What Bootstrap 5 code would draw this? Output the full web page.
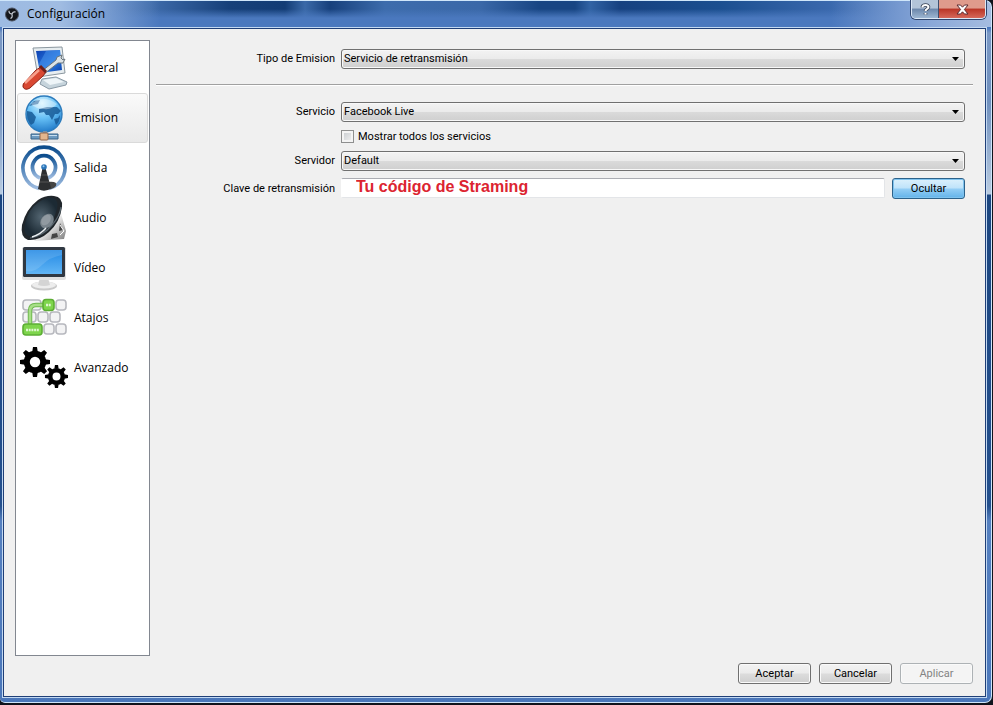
<!DOCTYPE html>
<html lang="es">
<head>
<meta charset="utf-8">
<meta name="viewport" content="width=device-width, initial-scale=1">
<title>Configuración</title>
<link href="https://cdn.jsdelivr.net/npm/bootstrap@5.3.0/dist/css/bootstrap.min.css" rel="stylesheet">
<style>
body { font: 11px/16px Roboto, sans-serif; color: #000; background: #10131c; }
.win {
  min-height: 100vh; padding: 0 1px 2px 0;
}
.glass {
  border: solid #cfe6fa; border-width: 1px 1px 1px 0; border-radius: 0 7px 7px 5px; padding: 0 5px 5px 3px;
  background:
    linear-gradient(90deg, #9dbbe2 0, #a0bce2 60px, transparent 160px) 0 0 / 100% 26px no-repeat,
    linear-gradient(270deg, #a5bce0 0, #8aa8d8 60px, transparent 160px) 0 0 / 100% 26px no-repeat,
    linear-gradient(180deg, transparent 8px, #4a78be 17px) 0 0 / 100% 26px no-repeat,
    linear-gradient(90deg, transparent 100px, #3f6cab 150px, #164079 230px, #123c75 285px, #3a69a8 305px, #16407c 330px, #3d6cac 385px, #3a68a8 480px, #174583 540px, #174583 575px, #3163a4 590px, #164180 620px, #1b4f90 720px, #3564a8 810px, transparent 900px) 0 0 / 100% 20px no-repeat,
    linear-gradient(180deg, #4a78be 0, #4a78be 27px, #7b98c4 32px, #6f8fbd 100px, #b9cbe0 193px, #1c4680 194px, #24508e 505px, #5580c0 520px, #4b77ba 100%);
}
.titlebar { height: 27px; font: 12px/16px "Open Sans", sans-serif; padding: 5px 0 0 2px; }
.caption-btns { margin-top: -6px; height: 19px; border: 1px solid #dce8f6; border-top: 0; border-radius: 0 0 5px 5px; overflow: hidden; box-shadow: 0 0 0 1px #30456c; }
.caption-btns button { border: 0; padding: 0; display: grid; place-items: center; }
.caption-btns .btn-help { width: 27px; background: linear-gradient(#b3c4d8 45%, #6c87ab 50%, #9db6d2); border-right: 1px solid #3d4f6f; }
.btn-shut { width: 46px; background: linear-gradient(#df9b8c 45%, #b93526 50%, #d5685a); }
.panel { background: #f0f0f0; border: 1px solid #1f3f78; outline: 1px solid #c3d9f2; padding: 11px 12px 12px 11px; }
.side { width: 135px; background: #fff; border: 1px solid #828790; padding: 2px 1px; }
.side a { height: 50px; padding: 0 2px; gap: 6px; font: 12px/16px "Open Sans", sans-serif; color: #000; text-decoration: none; border: 1px solid transparent; border-radius: 3px; }
.side a.active { background: linear-gradient(#fafafa, #e9e9e9); border-color: #dadada; }
.side svg { width: 48px; height: 48px; flex: none; }
.main-col { margin-left: 6px; padding-top: 9px; }
.form-rows { display: grid; grid-template-columns: 179px 1fr; column-gap: 6px; padding-right: 8px; align-items: center; }
.form-rows > label { text-align: right; }
.tick-row { grid-column: 2; height: 29px; }
.drop {
  appearance: none; width: 100%; height: 20px; border: 1px solid #707070; border-radius: 3px; padding: 0 20px 0 2px; color: #000; font: inherit; line-height: 18px;
  background: url("data:image/svg+xml,%3Csvg xmlns='http://www.w3.org/2000/svg' width='7' height='4'%3E%3Cpath d='M0 0h7L3.500 4z'/%3E%3C/svg%3E") right 5px center no-repeat, linear-gradient(#f3f3f3 0, #ebebeb 48%, #dadada 52%, #cfcfcf 100%);
  box-shadow: inset 0 0 0 1px #f8f8f8;
}
.rule { margin: 15px 0 17px; border: 0; border-top: 1px solid #a0a0a0; opacity: 1; box-shadow: 0 1px #fff; }
.tick { appearance: none; width: 13px; height: 13px; margin: 0; border: 1px solid #8e8f8f; background: linear-gradient(135deg, #c4c8cc, #f4f4f4); box-shadow: inset 0 0 0 2px #f4f4f4; }
.key-row { padding-top: 7px; gap: 7px; }
.key { flex: 1; min-width: 0; height: 20px; border: 1px solid #e3e5e8; border-top-color: #abadb3; border-left-color: #fff; border-radius: 2px; padding: 0 14px 2px; font: bold 16px/16px "Liberation Sans", sans-serif; color: #dc2430; background: #fff; }
.push { width: 73px; height: 21px; padding: 0; border: 1px solid #707070; border-radius: 3px; font: inherit; color: #000; background: linear-gradient(#f3f3f3 0, #ebebeb 48%, #dcdcdc 52%, #cfcfcf 100%); box-shadow: inset 0 0 0 1px #fafafa; }
.push.hot { border-color: #2c628b; background: linear-gradient(#dcf1fc 0, #bfe3fa 48%, #94cef5 52%, #62b3ea 100%); box-shadow: inset 0 0 0 1px #7fc3ee; }
.push:disabled { border-color: #adb2b5; color: #838383; background: #f4f4f4; }
.actions { padding-top: 7px; }
</style>
<script src="https://cdn.jsdelivr.net/npm/bootstrap@5.3.0/dist/js/bootstrap.bundle.min.js"></script>
</head>
<body>
<div class="win d-flex flex-column">
<div class="glass d-flex flex-column flex-grow-1">
  <header class="titlebar d-flex align-items-start">
    <svg class="flex-shrink-0" width="14" height="16" viewBox="0 -1 14 16" aria-hidden="true"><circle cx="7" cy="7.500" r="6.500" fill="#15171b" stroke="#4b5260"/><g fill="none" stroke="#c4c9d0" stroke-width="1.200"><path d="M4 3.700c-.2 2 1 3.200 3 3.200M10.600 5c-1.900-.6-3.300.4-3.600 2.400M5.500 11.500c1.700-.8 2.200-2.400 1.300-4.100"/></g></svg>
    <span class="ms-1 ps-1">Configuración</span>
    <div class="caption-btns d-flex ms-auto">
      <button type="button" class="btn-help" aria-label="Ayuda"><svg width="11" height="13" viewBox="0 0 11 13"><g fill="none"><path d="M2.500 4.500V3.500Q3 2 5.500 2T8.500 4Q8.500 5 7 6T5.500 8M5.500 10v1.500" stroke="#3b4557" stroke-width="3.600"/><path d="M2.500 4.500V3.500Q3 2 5.500 2T8.500 4Q8.500 5 7 6T5.500 8M5.500 10v1.500" stroke="#fff" stroke-width="2"/></g></svg></button>
      <button type="button" class="btn-shut" aria-label="Cerrar"><svg width="13" height="11" viewBox="0 0 13 11"><path d="M1 1h3.500l2 2.200L8.500 1H12L8.400 5.500 12 10H8.500l-2-2.200L4.500 10H1l3.600-4.500z" fill="#fff" stroke="#5a2b30"/></svg></button>
    </div>
  </header>
  <div class="panel d-flex flex-column flex-grow-1">
    <div class="d-flex flex-grow-1">
      <nav class="side d-flex flex-column">
        <a href="#general" class="d-flex align-items-center">
          <svg viewBox="0 0 48 48"><defs><linearGradient id="scr" x2="1" y2="1"><stop stop-color="#0c3fb0"/><stop offset=".6" stop-color="#2b7be4"/><stop offset="1" stop-color="#0a3da6"/></linearGradient></defs><path d="M22 35l14-2 11 5-1 3-17 4-9-5z" fill="#c6d4dc" stroke="#8a9aa6"/><path d="M23 36l13-2 8 4-14 3z" fill="#eef5f8"/><path d="M13 4l29-1 3 26-27 4z" fill="#e7edf0" stroke="#8b979f"/><path d="M16 7l24-1 2 20-22 3z" fill="url(#scr)"/><path d="M26 7l14-1 1 10-17 12h-4l-1-8z" fill="#4b98ee" opacity=".5"/><path d="M22 27L36 16l1-3 5-2-1 3 2 2 2-1-2 4-5 0-14 11z" fill="#dce3e7" stroke="#69747c"/><path d="M21 23l5 5-3 4-13 12q-5 3-7-1-1-3 3-6l10-11z" fill="#d84832" stroke="#8e2418"/><path d="M5 39l14-13" stroke="#f7a08c" stroke-width="2.500"/><path d="M20 22l6 6" stroke="#70201a" stroke-width="3"/></svg>
          General</a>
        <a href="#emision" class="d-flex align-items-center active" aria-current="page">
          <svg viewBox="0 0 48 48"><defs><radialGradient id="glb" cx=".45" cy=".2" r=".85"><stop stop-color="#d4f3ff"/><stop offset=".5" stop-color="#65bff5"/><stop offset="1" stop-color="#1a73c4"/></radialGradient></defs><path d="M11 40h27v5H11z" fill="#6d9ac0" stroke="#38648a"/><path d="M12 41.500h25" stroke="#c6def0"/><circle cx="24" cy="20" r="18" fill="url(#glb)" stroke="#2d7cbd" stroke-width="1.400"/><path d="M7 17l5 1 4 5-2 6-3 2q-4-5-4-10zM19 15l8-2 10 0 4 4-3 3-3 0-3 6-3-5-3 0-2-3-5 1zM9 12l5-5 6-1-2 4-5 1zM34 25l4-1 2-3q0 7-4 10z" fill="#185a96" opacity=".85"/><path d="M11 10q12-10 26 0-5 6-13 5-8 0-13-5z" fill="#fff" opacity=".38"/><path d="M23 37h4v4h-4z" fill="#7690a6"/><rect x="20" y="39" width="8" height="7" rx="1" fill="#e2b68e" stroke="#93664b"/></svg>
          Emision</a>
        <a href="#salida" class="d-flex align-items-center">
          <svg viewBox="0 0 48 48"><defs><linearGradient id="wav" x2="0" y2="1"><stop stop-color="#0d4d8d"/><stop offset=".5" stop-color="#4e82b8"/><stop offset="1" stop-color="#9fbce0"/></linearGradient></defs><g fill="none" stroke="url(#wav)"><path d="M19 44.500A21 21 0 1 1 29 44.500" stroke-width="3.600"/><path d="M20 34A11.500 11.500 0 1 1 28 34" stroke-width="3.800"/></g><path d="M28 38q10-1 8 4-3 4-13 4z" fill="#444"/><path d="M22.500 24h3L31 44q-6 5-13 1z" fill="#2d2f31"/><path d="M21 31h6M20 38h9" stroke="#555"/><circle cx="24" cy="23" r="2.800" fill="#2c75b8"/><circle cx="23.500" cy="22.300" r="1" fill="#8fc6f2"/></svg>
          Salida</a>
        <a href="#audio" class="d-flex align-items-center">
          <svg viewBox="0 0 48 48"><defs><linearGradient id="met" x2="1" y2="1"><stop stop-color="#666"/><stop offset=".5" stop-color="#eee"/><stop offset="1" stop-color="#777"/></linearGradient><radialGradient id="con"><stop stop-color="#536571"/><stop offset="1" stop-color="#1c2a34"/></radialGradient></defs><path d="M40 16l6 21-2 8-30 2 12-14z" fill="url(#met)"/><path d="M40 29l3 7-4 1zM32 40l5-1 1 4-7 2z" fill="#444"/><path d="M40 31l4 6-4 4" stroke="#fff" fill="none"/><path d="M34 2q9 1 8 11-2 15-13 25-10 9-21 8-8-3-6-15Q6 15 18 6 26 1 34 2z" fill="#20262b"/><path d="M33 4q6 2 4 11-3 12-12 20-10 8-16 7-6-2-4-12Q8 15 19 8q8-5 14-4z" fill="url(#con)"/><path d="M10 44q13-2 22-13 8-9 9-18" fill="none" stroke="#59666f" stroke-width="1.200"/><ellipse cx="27" cy="27" rx="6" ry="8" transform="rotate(38 27 27)" fill="#78838b"/><ellipse cx="26" cy="26" rx="4" ry="6" transform="rotate(38 26 26)" fill="#919aa1"/><path d="M12 43q9-3 14-9" stroke="#e9eef1" stroke-width="1.500" fill="none"/></svg>
          Audio</a>
        <a href="#video" class="d-flex align-items-center">
          <svg viewBox="0 0 48 48"><defs><linearGradient id="tv" x2="0" y2="1"><stop stop-color="#2389e4"/><stop offset="1" stop-color="#61b5f5"/></linearGradient></defs><ellipse cx="24" cy="42" rx="13" ry="4.500" fill="#c9c9c9"/><ellipse cx="24" cy="41" rx="12" ry="3.500" fill="#ededed"/><path d="M20 34h8l2 7q-6 2-12 0z" fill="#d4d4d4"/><rect x="2" y="3" width="44" height="33" rx="2" fill="#e1e1e1"/><rect x="3" y="3" width="42" height="30" rx="1.500" fill="#303842"/><rect x="6" y="6" width="36" height="24" fill="url(#tv)"/><path d="M6 6h36v5Q30 13 22 21T6 27z" fill="#fff" opacity=".13"/></svg>
          Vídeo</a>
        <a href="#atajos" class="d-flex align-items-center">
          <svg viewBox="0 0 48 48"><g fill="#f3f3f4" stroke="#b7b8be" stroke-width="1.600"><rect x="3" y="6" width="18" height="10" rx="3"/><rect x="36" y="6" width="10" height="10" rx="3"/><rect x="3" y="18" width="13" height="10" rx="3"/><rect x="18" y="18" width="10" height="10" rx="3"/><rect x="30" y="18" width="10" height="10" rx="3"/><rect x="24" y="30" width="10" height="10" rx="3"/><rect x="36" y="30" width="10" height="10" rx="3"/></g><path d="M10 32V17q0-6 6-6h10" fill="none" stroke="#70b850" stroke-width="4.500"/><path d="M10 32V17q0-6 6-6h10" fill="none" stroke="#a7df87" stroke-width="2.500"/><g fill="#7ed54c" stroke="#5cad34" stroke-width="1.600"><rect x="23" y="5.500" width="11" height="11" rx="3"/><rect x="3" y="30" width="19" height="11" rx="3"/></g><path d="M26 11h5M6 36h13" stroke="#dff7d0" stroke-width="2.500" stroke-dasharray="2 .7"/></svg>
          Atajos</a>
        <a href="#avanzado" class="d-flex align-items-center">
          <svg viewBox="0 0 48 48"><defs><g id="gear"><circle r="8.200" fill="none" stroke="#000" stroke-width="6"/><g id="tt"><path id="t1" d="M-2-15h4l.8 5h-5.600zM-2 15h4l.8-5h-5.600z"/><use href="#t1" transform="rotate(90)"/></g><use href="#tt" transform="rotate(45)"/></g></defs><use href="#gear" transform="translate(15 18)"/><use href="#gear" transform="translate(36.500 32.500) scale(.77)"/></svg>
          Avanzado</a>
      </nav>
      <main class="main-col flex-grow-1">
        <div class="form-rows">
          <label for="tipo">Tipo de Emision</label>
          <select class="drop" id="tipo"><option>Servicio de retransmisión</option></select>
        </div>
        <hr class="rule">
        <div class="form-rows">
          <label for="servicio">Servicio</label>
          <select class="drop" id="servicio"><option>Facebook Live</option></select>
          <div class="tick-row d-flex align-items-center gap-1">
            <input class="tick" type="checkbox" id="todos"><label for="todos">Mostrar todos los servicios</label>
          </div>
          <label for="servidor">Servidor</label>
          <select class="drop" id="servidor"><option>Default</option></select>
          <label for="clave" class="pt-2">Clave de retransmisión</label>
          <div class="key-row d-flex">
            <input class="key" id="clave" type="text" value="Tu código de Straming">
            <button type="button" class="push hot">Ocultar</button>
          </div>
        </div>
      </main>
    </div>
    <footer class="actions d-flex justify-content-end gap-2">
      <button type="button" class="push">Aceptar</button>
      <button type="button" class="push">Cancelar</button>
      <button type="button" class="push" disabled>Aplicar</button>
    </footer>
  </div>
</div>
</div>
</body>
</html>
